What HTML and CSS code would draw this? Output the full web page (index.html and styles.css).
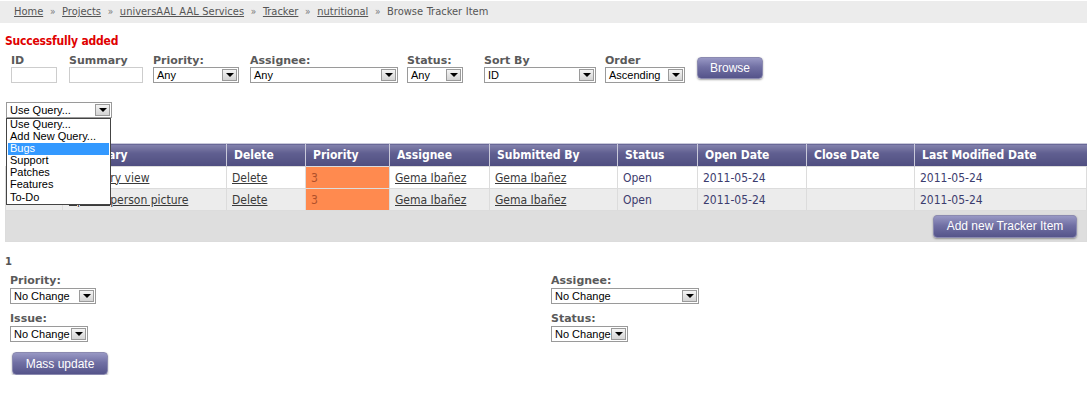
FILE: index.html
```html
<!DOCTYPE html>
<html lang="en">
<head>
	<meta charset="UTF-8">
	<title>Browse Tracker Item</title>
	<link rel="stylesheet" href="styles.css">
</head>
<body>
	<div class="crumbs">
		<a href="#">Home</a> <span class="sep">&raquo;</span>
		<a href="#">Projects</a> <span class="sep">&raquo;</span>
		<a href="#">universAAL AAL Services</a> <span class="sep">&raquo;</span>
		<a href="#">Tracker</a> <span class="sep">&raquo;</span>
		<a href="#">nutritional</a> <span class="sep">&raquo;</span> Browse Tracker Item
	</div>

	<div class="page">
		<p class="msg">Successfully added</p>

		<!-- filter bar -->
		<div class="filters">
			<div class="field f-id"><label>ID</label><span class="txt w46"></span></div>
			<div class="field f-sum"><label>Summary</label><span class="txt w74"></span></div>
			<div class="field f-pri"><label>Priority:</label><span class="sel w86"><span class="val">Any</span><span class="arr"></span></span></div>
			<div class="field f-asg"><label>Assignee:</label><span class="sel w148"><span class="val">Any</span><span class="arr"></span></span></div>
			<div class="field f-sta"><label>Status:</label><span class="sel w56"><span class="val">Any</span><span class="arr"></span></span></div>
			<div class="field f-sort"><label>Sort By</label><span class="sel w112"><span class="val">ID</span><span class="arr"></span></span></div>
			<div class="field f-ord"><label>Order</label><span class="sel w80"><span class="val">Ascending</span><span class="arr"></span></span></div>
			<button class="btn btn-browse">Browse</button>
		</div>

		<!-- saved queries, opened -->
		<div class="query">
			<span class="sel w106"><span class="val">Use Query...</span><span class="arr"></span></span>
			<ul class="dropdown">
				<li>Use Query...</li>
				<li>Add New Query...</li>
				<li class="on">Bugs</li>
				<li>Support</li>
				<li>Patches</li>
				<li>Features</li>
				<li>To-Do</li>
			</ul>
		</div>

		<table class="tracker">
			<colgroup>
				<col style="width:57px"><col style="width:164px"><col style="width:79px"><col style="width:84px"><col style="width:100px">
				<col style="width:128px"><col style="width:80px"><col style="width:109px"><col style="width:108px"><col>
			</colgroup>
			<thead>
				<tr>
					<th></th><th>Summary</th><th>Delete</th><th>Priority</th><th>Assignee</th>
					<th>Submitted By</th><th>Status</th><th>Open Date</th><th>Close Date</th><th>Last Modified Date</th>
				</tr>
			</thead>
			<tbody>
				<tr>
					<td></td><td class="sum"><a href="#">Summary view</a></td><td><a href="#">Delete</a></td>
					<td class="prio">3</td><td><a href="#">Gema Ibañez</a></td><td><a href="#">Gema Ibañez</a></td>
					<td>Open</td><td>2011-05-24</td><td></td><td>2011-05-24</td>
				</tr>
				<tr class="alt">
					<td></td><td class="sum"><a href="#">Upload person picture</a></td><td><a href="#">Delete</a></td>
					<td class="prio">3</td><td><a href="#">Gema Ibañez</a></td><td><a href="#">Gema Ibañez</a></td>
					<td>Open</td><td>2011-05-24</td><td></td><td>2011-05-24</td>
				</tr>
				<tr class="foot">
					<td colspan="10"><button class="btn btn-add">Add new Tracker Item</button></td>
				</tr>
			</tbody>
		</table>

		<p class="count">1</p>

		<!-- mass update -->
		<div class="mass">
			<div class="field"><label>Priority:</label><span class="sel w86"><span class="val">No Change</span><span class="arr"></span></span></div>
			<div class="field"><label>Assignee:</label><span class="sel w148"><span class="val">No Change</span><span class="arr"></span></span></div>
			<div class="field"><label>Issue:</label><span class="sel w78"><span class="val">No Change</span><span class="arr"></span></span></div>
			<div class="field"><label>Status:</label><span class="sel w77"><span class="val">No Change</span><span class="arr"></span></span></div>
		</div>
		<button class="btn btn-mass">Mass update</button>
	</div>
</body>
</html>
```

FILE: styles.css
```css
* {
	box-sizing: border-box;
}
body {
	margin: 0;
	font-family: "DejaVu Sans", sans-serif;
	font-size: 12px;
	color: #555;
	background: #fff;
}
a {
	color: #444;
}

/* breadcrumb */
.crumbs {
	margin-top: 1px;
	height: 22px;
	line-height: 22px;
	padding-left: 14px;
	background: #ececec;
	color: #555;
	font-size: 11px;
	font-stretch: condensed;
	word-spacing: 0.5px;
}
.crumbs a {
	color: #555;
}
.crumbs .sep {
	color: #777;
	font-size: 10px;
	margin: 0 3px;
}

.page {
	padding-left: 5px;
}
.msg {
	margin: 10px 0 0;
	height: 16px;
	line-height: 16px;
	color: #e00000;
	font-weight: bold;
	font-size: 12px;
	font-stretch: condensed;
	letter-spacing: -0.2px;
}

/* form controls */
label {
	display: block;
	font-weight: bold;
	font-size: 11px;
	color: #5a5a5a;
	line-height: 12px;
	height: 12px;
}
.txt, .sel {
	display: inline-block;
	height: 16px;
	background: #fff;
	vertical-align: top;
}
.txt {
	border: 1px solid #cdcdcd;
}
.sel {
	display: flex;
	border: 1px solid #9a9a9a;
	padding: 1px;
	font-family: "Liberation Sans", Arial, sans-serif;
	font-size: 11px;
	color: #000;
	line-height: 12px;
}
.sel .val {
	flex: 1;
	padding-left: 2px;
	white-space: nowrap;
	overflow: hidden;
}
.sel .arr {
	width: 15px;
	height: 12px;
	border: 1px solid #9a9a9a;
	background: linear-gradient(#f4f4f4, #d4d4d4);
	position: relative;
}
.sel .arr::after {
	content: "";
	position: absolute;
	left: 3px;
	top: 3px;
	border-left: 4px solid transparent;
	border-right: 4px solid transparent;
	border-top: 4px solid #000;
}
.w46 { width: 46px; }
.w56 { width: 56px; }
.w74 { width: 74px; }
.w77 { width: 77px; }
.w78 { width: 78px; }
.w80 { width: 80px; }
.w86 { width: 86px; }
.w106 { width: 106px; }
.w112 { width: 112px; }
.w148 { width: 148px; }

/* purple buttons */
.btn {
	display: block;
	border: 1px solid #8b8ab0;
	border-radius: 4px;
	background: linear-gradient(#9898c4 0%, #7170a4 45%, #55548a 100%);
	box-shadow: 0 1px 2px rgba(0, 0, 0, 0.35);
	color: #fff;
	font-family: "Liberation Sans", Arial, sans-serif;
	font-size: 12px;
	padding: 0;
	height: 22px;
	line-height: 18px;
}

/* filter bar */
.filters {
	display: flex;
	align-items: flex-start;
	padding-left: 6px;
	margin-top: 6px;
}
.f-id { width: 58px; }
.f-sum { width: 84px; }
.f-pri { width: 97px; }
.f-asg { width: 157px; }
.f-sta { width: 77px; }
.f-sort { width: 121px; }
.f-ord { width: 92px; }
.btn-browse {
	width: 66px;
	margin-top: 2px;
}

/* query select */
.query {
	position: relative;
	margin: 19px 0 0 1px;
	height: 41px;
}
.dropdown {
	position: absolute;
	z-index: 2;
	left: 0;
	top: 16px;
	width: 105px;
	height: 87px;
	margin: 0;
	padding: 0 1px;
	list-style: none;
	background: #fff;
	border: 1px solid #444;
	font-family: "Liberation Sans", Arial, sans-serif;
	font-size: 11px;
	color: #000;
}
.dropdown li {
	height: 12.1px;
	line-height: 11px;
	padding-left: 2px;
}
.dropdown li.on {
	background: #3399ff;
	color: #fff;
}

/* tracker table */
.tracker {
	width: 1082px;
	border-collapse: collapse;
	table-layout: fixed;
	font-size: 12px;
	font-stretch: condensed;
}
.tracker th {
	height: 23px;
	padding: 0 7px;
	text-align: left;
	color: #fff;
	font-size: 12px;
	background: linear-gradient(#8483ae 0%, #605f90 40%, #4f4e80 100%);
	border-left: 1px solid #c9c9da;
	border-top: 1px solid #c9c9da;
}
.tracker th:first-child {
	border-left: 0;
}
.tracker td {
	height: 22px;
	padding: 0 5px;
	border: 1px solid #dcdcdc;
	white-space: nowrap;
	overflow: hidden;
	color: #3c3c6e;
}
.tracker td.sum {
	padding-left: 6px;
}
.tracker td a {
	color: #3a3a3a;
}
.tracker tr.alt td {
	background: #ececec;
}
.tracker tr td.prio {
	background: #ff8a4f;
	color: #b0502a;
}
.tracker tr.foot td {
	height: 31px;
	background: #dedede;
	padding: 0 9px 0 0;
}
.btn-add {
	margin-left: auto;
	width: 144px;
	height: 23px;
}

/* bottom part */
.count {
	margin: 14px 0 0;
	font-weight: bold;
	font-size: 10px;
	color: #555;
}
.mass {
	display: grid;
	grid-template-columns: 541px 300px;
	row-gap: 9px;
	padding-left: 5px;
	margin-top: 8px;
}
.mass label {
	margin-bottom: 1px;
}
.btn-mass {
	margin: 10px 0 0 7px;
	width: 96px;
	height: 23px;
}
```
